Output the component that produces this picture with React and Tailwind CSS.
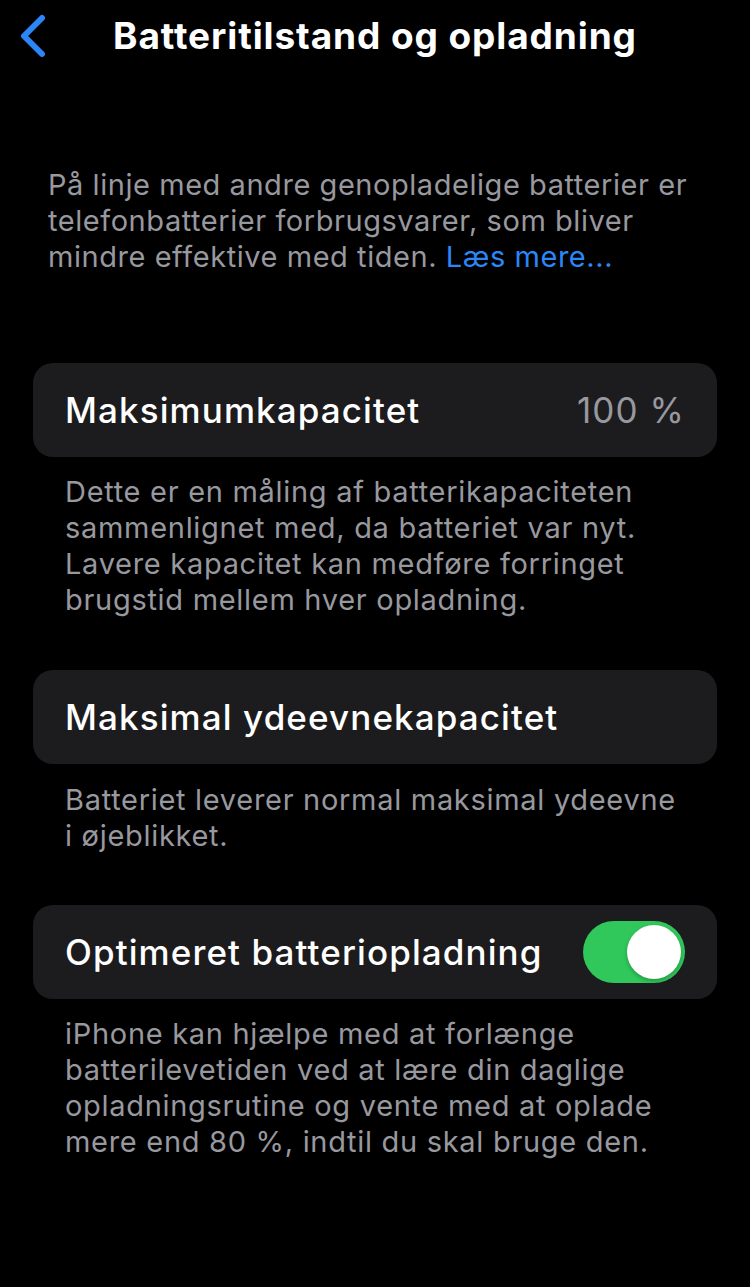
import React from "react";

const font = { fontFamily: "Inter, 'Noto Sans', sans-serif" };

function Card({ children }) {
  return (
    <div className="mx-[33px] h-[94px] rounded-[20px] bg-[#1c1c1e] flex items-center justify-between pl-[32px] pr-[32px]">
      {children}
    </div>
  );
}

function Footer({ children, className = "" }) {
  return (
    <p className={"px-[65px] text-[29px] leading-[36px] text-[#98989f] tracking-[0.7px] whitespace-nowrap " + className}>
      {children}
    </p>
  );
}

const label = "text-white text-[35px] font-medium tracking-[1.1px]";

export default function App() {
  return (
    <div className="w-[750px] h-[1287px] bg-black overflow-hidden" style={font}>
      <div className="relative h-[72px] flex items-center justify-center">
        <svg className="absolute left-[17px] top-[14px]" width="30" height="44" viewBox="0 0 30 44">
          <path d="M25 4 L7 22 L25 40" fill="none" stroke="#2b87f7" strokeWidth="6" strokeLinecap="round" strokeLinejoin="round" />
        </svg>
        <h1 className="text-white font-bold text-[37px] tracking-[0.9px]">Batteritilstand og opladning</h1>
      </div>
      <p className="mt-[95px] px-[48px] text-[29px] leading-[36px] text-[#98989f] tracking-[0.55px] whitespace-nowrap">
        På linje med andre genopladelige batterier er
        <br />
        telefonbatterier forbrugsvarer, som bliver
        <br />
        mindre effektive med tiden.{" "}
        <span className="text-[#2b87f7]">Læs mere...</span>
      </p>
      <div className="mt-[88px]">
        <Card>
          <span className={label}>Maksimumkapacitet</span>
          <span className="text-[#98989f] text-[35px] tracking-[1.1px]">100 %</span>
        </Card>
      </div>
      <Footer className="mt-[17px]">
        Dette er en måling af batterikapaciteten
        <br />
        sammenlignet med, da batteriet var nyt.
        <br />
        Lavere kapacitet kan medføre forringet
        <br />
        brugstid mellem hver opladning.
      </Footer>
      <div className="mt-[52px]">
        <Card>
          <span className={label}>Maksimal ydeevnekapacitet</span>
        </Card>
      </div>
      <Footer className="mt-[18px]">
        Batteriet leverer normal maksimal ydeevne
        <br />
        i øjeblikket.
      </Footer>
      <div className="mt-[51px]">
        <Card>
          <span className={label}>Optimeret batteriopladning</span>
          <div className="w-[102px] h-[62px] rounded-full bg-[#30c85a] flex items-center justify-end pr-[4px]">
            <div className="w-[54px] h-[54px] rounded-full bg-white shadow-[0_2px_4px_rgba(0,0,0,0.25)]" />
          </div>
        </Card>
      </div>
      <Footer className="mt-[17px]">
        iPhone kan hjælpe med at forlænge
        <br />
        batterilevetiden ved at lære din daglige
        <br />
        opladningsrutine og vente med at oplade
        <br />
        mere end 80 %, indtil du skal bruge den.
      </Footer>
    </div>
  );
}
